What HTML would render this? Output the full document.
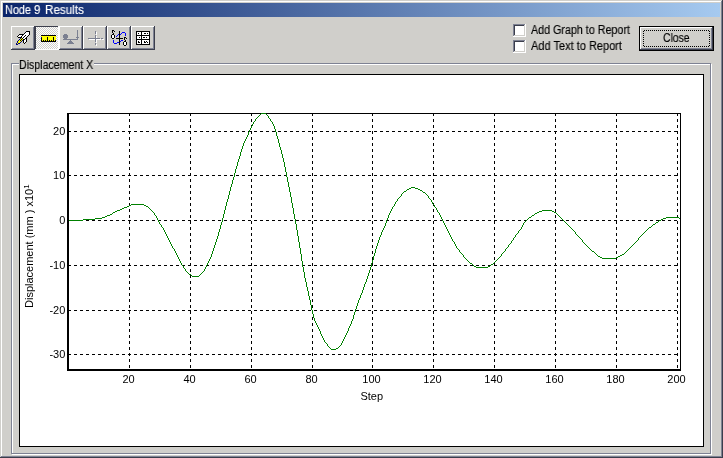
<!DOCTYPE html>
<html><head><meta charset="utf-8"><title>Node 9 Results</title>
<style>
html,body{margin:0;padding:0}
body{width:723px;height:458px;overflow:hidden;background:#d0cfcb;position:relative;font-family:"Liberation Sans",sans-serif;color:#000}
.abs{position:absolute}
.ln{position:absolute}
.title{left:3px;top:3px;width:717px;height:14px;background:linear-gradient(to right,#0a246a,#a6caf0)}
.tx{position:absolute;white-space:nowrap;font-size:12px;line-height:12px;transform-origin:0 0;display:block;will-change:transform;-webkit-text-stroke:.15px currentColor}
.tb{position:absolute;top:26px;width:24px;height:24px;box-sizing:border-box;background:#d0cfcb}
.tb.up{box-shadow:inset -1px -1px 0 #3b3e4c,inset 1px 1px 0 #fff,inset -2px -2px 0 #7e8293}
.tb.down{box-shadow:inset -1px -1px 0 #fff,inset 1px 1px 0 #3b3e4c;background:conic-gradient(#d0cfcb 25%,#fff 0 50%,#d0cfcb 0 75%,#fff 0) 0 0/2px 2px}
.tb svg{position:absolute;left:0;top:0}
.tb.down svg{left:0;top:0}
.cb{position:absolute;left:513px;width:13px;height:13px;background:#fff;box-shadow:inset -1px -1px 0 #fff,inset 1px 1px 0 #7e8293,inset -2px -2px 0 #d0cfcb,inset 2px 2px 0 #3b3e4c}
.btn{position:absolute;left:639px;top:26px;width:75px;height:25px;box-sizing:border-box;border:1px solid #000;background:#d0cfcb;box-shadow:inset -1px -1px 0 #3b3e4c,inset 1px 1px 0 #fff,inset -2px -2px 0 #7e8293}
.fr{position:absolute;left:-1px;top:-1px}
.panel{position:absolute;left:19px;top:74px;width:685px;height:373px;box-sizing:border-box;border:1px solid #000;background:#fff}
.plot{position:absolute;left:0;top:0;will-change:transform}
</style></head><body>
<!-- window frame -->
<div class="ln" style="left:1px;top:1px;width:720px;height:1px;background:#fff"></div>
<div class="ln" style="left:1px;top:1px;width:1px;height:455px;background:#fff"></div>
<div class="ln" style="left:721px;top:1px;width:1px;height:456px;background:#7e8293"></div>
<div class="ln" style="left:1px;top:456px;width:721px;height:1px;background:#7e8293"></div>
<div class="ln" style="left:722px;top:0;width:1px;height:458px;background:#3b3e4c"></div>
<div class="ln" style="left:0;top:457px;width:723px;height:1px;background:#3b3e4c"></div>
<div class="abs title"></div>
<div class="abs" style="left:0;top:4px;color:#fff"><span class="tx" style="left:4.6px;top:0;transform:scaleX(.905)">Node </span><span class="tx" style="left:34px;top:0;transform:scaleX(.95)">9 </span><span class="tx" style="left:44.8px;top:0;transform:scaleX(.972)">Results</span></div>
<!-- toolbar -->
<div class="tb up" style="left:11px"><svg width="24" height="24" viewBox="0 0 24 24" shape-rendering="crispEdges"><path fill="#000" d="M15 5h4v1h-4zM14 6h1v1h-1zM18 6h1v1h-1zM13 7h1v1h-1zM18 7h1v1h-1zM8 8h5v1h-5zM18 8h1v1h-1zM7 9h1v1h-1zM11 9h1v1h-1zM14 9h1v1h-1zM17 9h1v1h-1zM6 10h1v1h-1zM10 10h1v1h-1zM13 10h1v1h-1zM16 10h1v1h-1zM7 11h4v1h-4zM12 11h1v1h-1zM15 11h1v1h-1zM11 12h1v1h-1zM14 12h2v1h-2zM10 13h1v1h-1zM12 13h2v1h-2zM15 13h1v1h-1zM9 14h1v1h-1zM12 14h1v1h-1zM15 14h1v1h-1zM12 15h1v1h-1zM15 15h1v1h-1zM12 16h1v1h-1zM14 16h1v1h-1zM13 17h1v1h-1z"/><path fill="#fff" d="M15 6h3v1h-3zM14 7h4v1h-4zM13 8h5v1h-5zM8 9h3v1h-3zM12 9h2v1h-2zM15 9h2v1h-2zM7 10h3v1h-3zM11 10h2v1h-2zM14 10h2v1h-2zM11 11h1v1h-1zM13 11h2v1h-2zM12 12h2v1h-2zM14 13h1v1h-1zM13 14h2v1h-2zM13 15h2v1h-2zM13 16h1v1h-1z"/><path fill="#000080" d="M9 12h1v1h-1zM8 13h1v1h-1zM7 14h1v1h-1zM11 14h1v1h-1zM6 15h1v1h-1zM10 15h1v1h-1zM6 16h1v1h-1zM9 16h1v1h-1zM5 17h1v1h-1zM7 17h2v1h-2zM5 18h2v1h-2z"/><path fill="#ff0" d="M10 12h1v1h-1zM9 13h1v1h-1zM11 13h1v1h-1zM8 14h1v1h-1zM10 14h1v1h-1zM7 15h3v1h-3zM7 16h2v1h-2zM6 17h1v1h-1z"/></svg></div>
<div class="tb down" style="left:35px"><svg width="24" height="24" viewBox="0 0 24 24" shape-rendering="crispEdges"><path fill="#000" d="M6 9h15v1h-15zM12 11h1v1h-1zM18 11h1v1h-1zM6 12h1v1h-1zM12 12h1v1h-1zM18 12h1v1h-1zM6 13h1v1h-1zM12 13h1v1h-1zM18 13h1v1h-1zM6 14h1v1h-1zM8 14h1v1h-1zM10 14h1v1h-1zM12 14h1v1h-1zM14 14h1v1h-1zM16 14h1v1h-1zM18 14h1v1h-1zM20 14h1v1h-1zM6 15h15v1h-15z"/><path fill="#ff0" d="M6 10h15v1h-15zM7 11h5v1h-5zM13 11h5v1h-5zM19 11h2v1h-2zM7 12h5v1h-5zM13 12h5v1h-5zM19 12h2v1h-2zM7 13h5v1h-5zM13 13h5v1h-5zM19 13h2v1h-2zM7 14h1v1h-1zM9 14h1v1h-1zM11 14h1v1h-1zM13 14h1v1h-1zM15 14h1v1h-1zM17 14h1v1h-1zM19 14h1v1h-1z"/><path fill="#000080" d="M6 11h1v1h-1z"/></svg></div>
<div class="tb up" style="left:59px"><svg width="24" height="24" viewBox="0 0 24 24" shape-rendering="crispEdges"><path fill="#7b8091" d="M18 4h1v10h-1zM17 11h3v1h-3zM4 13h15v1h-15zM5 8h3v1h-3zM4 9h5v3h-5zM5 12h3v1h-3zM11 14h1v1h-1zM10 15h3v1h-3zM9 16h5v1h-5zM8 17h7v1h-7z"/></svg></div>
<div class="tb up" style="left:83px"><svg width="24" height="24" viewBox="0 0 24 24" shape-rendering="crispEdges"><path fill="#fff" d="M6 13h12v1h-12zM19 13h2v1h-2zM13 6h1v3h-1zM13 10h1v7h-1zM13 18h1v2h-1z"/><path fill="#7b8091" d="M5 12h12v1h-12zM18 12h2v1h-2zM12 5h1v3h-1zM12 9h1v7h-1zM12 17h1v2h-1z"/></svg></div>
<div class="tb up" style="left:107px"><svg width="24" height="24" viewBox="0 0 24 24" shape-rendering="crispEdges"><path fill="#fff" d="M5 9h2v3h-2zM17 16h2v3h-2z"/><path fill="#00f" d="M9 10h1v1h-1zM10 9h1v1h-1zM11 8h1v1h-1zM13 8h1v1h-1zM14 7h1v1h-1zM15 6h3v1h-3zM18 7h1v1h-1zM18 8h1v2h-1zM6 14h1v3h-1zM7 17h3v1h-3zM10 16h2v1h-2zM13 15h1v1h-1zM14 14h2v1h-2z"/><path fill="#000" d="M12 5h1v14h-1zM9 12h7v1h-7zM5 4h2v1h-2zM7 5h1v1h-1zM5 5h1v2h-1zM6 7h1v1h-1zM5 8h2v1h-2zM4 9h1v3h-1zM7 9h1v3h-1zM5 12h2v1h-2zM17 11h2v1h-2zM19 12h1v1h-1zM17 12h1v2h-1zM18 14h1v1h-1zM17 15h2v1h-2zM16 16h1v3h-1zM19 16h1v3h-1zM17 19h2v1h-2z"/></svg></div>
<div class="tb up" style="left:131px"><svg width="24" height="24" viewBox="0 0 24 24" shape-rendering="crispEdges"><path fill="#000" d="M5 5h14v14h-14z"/><path fill="#fff" d="M6 6h4v3h-4zM11 6h7v3h-7zM6 10h4v3h-4zM11 10h7v3h-7zM6 14h4v4h-4zM11 14h7v4h-7z"/><path fill="#000" d="M7 7h1v1h-1zM13 7h2v1h-2zM16 7h1v1h-1zM8 11h1v1h-1zM12 11h2v1h-2zM15 11h1v1h-1zM7 15h1v2h-1zM8 16h1v1h-1zM13 15h1v2h-1zM14 16h1v1h-1zM15 15h1v1h-1zM16 16h1v1h-1z"/></svg></div>
<!-- checkboxes -->
<div class="cb" style="top:24px"></div>
<div class="cb" style="top:40px"></div>
<span class="tx" style="left:530.7px;top:24px;transform:scaleX(.893)">Add Graph to Report</span>
<span class="tx" style="left:530.7px;top:40px;transform:scaleX(.917)">Add Text to Report</span>
<!-- close button -->
<div class="btn"><svg class="fr" width="75" height="25" viewBox="0 0 75 25" shape-rendering="crispEdges"><path d="M5 4.5H70M5 20.5H70M4.5 5V20M70.5 5V20" fill="none" stroke="#000" stroke-width="1" stroke-dasharray="1 1"/></svg></div>
<span class="tx" style="left:663px;top:32px;transform:scaleX(.864)">Close</span>
<!-- group box -->
<div class="ln" style="left:12px;top:64px;width:700px;height:391px;box-sizing:border-box;border:1px solid #fff"></div>
<div class="ln" style="left:11px;top:63px;width:700px;height:391px;box-sizing:border-box;border:1px solid #7e8293"></div>
<div class="ln" style="left:19px;top:62px;width:75px;height:4px;background:#d0cfcb"></div>
<span class="tx" style="left:19px;top:59px;transform:scaleX(.883)">Displacement X</span>
<div class="panel"></div>
<svg class="plot" width="723" height="458" viewBox="0 0 723 458">
<g shape-rendering="crispEdges" stroke="#000" stroke-width="1" stroke-dasharray="3 3" fill="none">
<line x1="129.5" y1="113" x2="129.5" y2="369"/>
<line x1="190.5" y1="113" x2="190.5" y2="369"/>
<line x1="251.5" y1="113" x2="251.5" y2="369"/>
<line x1="312.5" y1="113" x2="312.5" y2="369"/>
<line x1="372.5" y1="113" x2="372.5" y2="369"/>
<line x1="433.5" y1="113" x2="433.5" y2="369"/>
<line x1="494.5" y1="113" x2="494.5" y2="369"/>
<line x1="555.5" y1="113" x2="555.5" y2="369"/>
<line x1="616.5" y1="113" x2="616.5" y2="369"/>
<line x1="677.5" y1="113" x2="677.5" y2="369"/>
<line x1="68" y1="131.5" x2="680" y2="131.5"/>
<line x1="68" y1="175.5" x2="680" y2="175.5"/>
<line x1="68" y1="220.5" x2="680" y2="220.5"/>
<line x1="68" y1="265.5" x2="680" y2="265.5"/>
<line x1="68" y1="310.5" x2="680" y2="310.5"/>
<line x1="68" y1="354.5" x2="680" y2="354.5"/>
</g>
<g shape-rendering="crispEdges" fill="#000">
<rect x="67" y="113" width="2" height="258"/>
<rect x="67" y="113" width="614" height="1"/>
<rect x="680" y="113" width="1" height="258"/>
<rect x="67" y="369" width="614" height="2"/>
</g>
<path fill="#008000" shape-rendering="crispEdges" d="M69 220h1v1h-1zM70 220h1v1h-1zM71 220h1v1h-1zM72 220h1v1h-1zM73 220h1v1h-1zM74 220h1v1h-1zM75 220h1v1h-1zM76 220h1v1h-1zM77 220h1v1h-1zM78 220h1v1h-1zM79 220h1v1h-1zM80 220h1v1h-1zM81 220h1v1h-1zM82 220h1v1h-1zM83 219h1v1h-1zM84 219h1v1h-1zM85 219h1v1h-1zM86 219h1v1h-1zM87 219h1v1h-1zM88 219h1v1h-1zM89 219h1v1h-1zM90 219h1v1h-1zM91 219h1v1h-1zM92 219h1v1h-1zM93 219h1v1h-1zM94 219h1v1h-1zM95 218h1v1h-1zM96 218h1v1h-1zM97 218h1v1h-1zM98 218h1v1h-1zM99 218h1v1h-1zM100 218h1v1h-1zM101 218h1v1h-1zM102 217h1v1h-1zM103 217h1v1h-1zM104 217h1v1h-1zM105 216h1v1h-1zM106 216h1v1h-1zM107 215h1v1h-1zM108 215h1v1h-1zM109 215h1v1h-1zM110 214h1v1h-1zM111 214h1v1h-1zM112 213h1v1h-1zM113 212h1v1h-1zM114 212h1v1h-1zM115 211h1v1h-1zM116 211h1v1h-1zM117 210h1v1h-1zM118 210h1v1h-1zM119 210h1v1h-1zM120 209h1v1h-1zM121 209h1v1h-1zM122 208h1v1h-1zM123 208h1v1h-1zM124 207h1v1h-1zM125 207h1v1h-1zM126 207h1v1h-1zM127 206h1v1h-1zM128 206h1v1h-1zM129 205h1v1h-1zM130 205h1v1h-1zM131 204h1v1h-1zM132 204h1v1h-1zM133 204h1v1h-1zM134 204h1v1h-1zM135 204h1v1h-1zM136 204h1v1h-1zM137 204h1v1h-1zM138 204h1v1h-1zM139 204h1v1h-1zM140 204h1v1h-1zM141 204h1v1h-1zM142 204h1v1h-1zM143 204h1v1h-1zM144 205h1v1h-1zM145 205h1v1h-1zM146 206h1v1h-1zM147 206h1v1h-1zM148 207h1v1h-1zM149 208h1v1h-1zM150 209h1v1h-1zM151 210h1v1h-1zM152 211h1v1h-1zM153 212h1v1h-1zM154 213h1v2h-1zM155 215h1v1h-1zM156 216h1v2h-1zM157 218h1v2h-1zM158 220h1v2h-1zM159 222h1v2h-1zM160 224h1v1h-1zM161 225h1v2h-1zM162 227h1v1h-1zM163 228h1v2h-1zM164 230h1v2h-1zM165 232h1v2h-1zM166 234h1v2h-1zM167 236h1v2h-1zM168 238h1v2h-1zM169 240h1v2h-1zM170 242h1v2h-1zM171 244h1v2h-1zM172 246h1v2h-1zM173 248h1v1h-1zM174 249h1v2h-1zM175 251h1v2h-1zM176 253h1v2h-1zM177 255h1v2h-1zM178 257h1v2h-1zM179 259h1v2h-1zM180 261h1v2h-1zM181 263h1v2h-1zM182 265h1v1h-1zM183 266h1v2h-1zM184 268h1v1h-1zM185 269h1v2h-1zM186 271h1v1h-1zM187 272h1v1h-1zM188 273h1v1h-1zM189 274h1v1h-1zM190 274h1v1h-1zM191 275h1v1h-1zM192 276h1v1h-1zM193 276h1v1h-1zM194 276h1v1h-1zM195 276h1v1h-1zM196 276h1v1h-1zM197 276h1v1h-1zM198 276h1v1h-1zM199 275h1v1h-1zM200 274h1v1h-1zM201 273h1v1h-1zM202 272h1v1h-1zM203 271h1v1h-1zM204 269h1v2h-1zM205 267h1v2h-1zM206 265h1v2h-1zM207 263h1v2h-1zM208 261h1v2h-1zM209 259h1v2h-1zM210 257h1v2h-1zM211 254h1v3h-1zM212 251h1v3h-1zM213 248h1v3h-1zM214 245h1v3h-1zM215 242h1v3h-1zM216 239h1v3h-1zM217 236h1v3h-1zM218 232h1v4h-1zM219 229h1v3h-1zM220 225h1v4h-1zM221 222h1v3h-1zM222 218h1v4h-1zM223 214h1v4h-1zM224 210h1v4h-1zM225 206h1v4h-1zM226 202h1v4h-1zM227 199h1v3h-1zM228 195h1v4h-1zM229 191h1v4h-1zM230 187h1v4h-1zM231 184h1v3h-1zM232 180h1v4h-1zM233 177h1v3h-1zM234 173h1v4h-1zM235 169h1v4h-1zM236 166h1v3h-1zM237 162h1v4h-1zM238 159h1v3h-1zM239 156h1v3h-1zM240 152h1v4h-1zM241 149h1v3h-1zM242 146h1v3h-1zM243 143h1v3h-1zM244 141h1v2h-1zM245 139h1v2h-1zM246 137h1v2h-1zM247 135h1v2h-1zM248 132h1v3h-1zM249 130h1v2h-1zM250 128h1v2h-1zM251 126h1v2h-1zM252 124h1v2h-1zM253 122h1v2h-1zM254 121h1v1h-1zM255 119h1v2h-1zM256 118h1v1h-1zM257 117h1v1h-1zM258 116h1v1h-1zM259 115h1v1h-1zM260 114h1v1h-1zM261 113h1v1h-1zM262 113h1v1h-1zM263 113h1v1h-1zM264 113h1v1h-1zM265 113h1v1h-1zM266 114h1v1h-1zM267 115h1v1h-1zM268 116h1v2h-1zM269 118h1v1h-1zM270 119h1v2h-1zM271 121h1v1h-1zM272 122h1v2h-1zM273 124h1v2h-1zM274 126h1v3h-1zM275 129h1v3h-1zM276 132h1v4h-1zM277 136h1v3h-1zM278 139h1v4h-1zM279 143h1v4h-1zM280 147h1v3h-1zM281 150h1v4h-1zM282 154h1v4h-1zM283 158h1v4h-1zM284 162h1v5h-1zM285 167h1v5h-1zM286 172h1v5h-1zM287 177h1v5h-1zM288 182h1v5h-1zM289 187h1v5h-1zM290 192h1v5h-1zM291 197h1v6h-1zM292 203h1v5h-1zM293 208h1v6h-1zM294 214h1v5h-1zM295 219h1v5h-1zM296 224h1v6h-1zM297 230h1v6h-1zM298 236h1v6h-1zM299 242h1v6h-1zM300 248h1v6h-1zM301 254h1v7h-1zM302 261h1v6h-1zM303 267h1v5h-1zM304 272h1v6h-1zM305 278h1v4h-1zM306 282h1v5h-1zM307 287h1v4h-1zM308 291h1v5h-1zM309 296h1v4h-1zM310 300h1v5h-1zM311 305h1v5h-1zM312 310h1v4h-1zM313 314h1v4h-1zM314 318h1v3h-1zM315 321h1v2h-1zM316 323h1v2h-1zM317 325h1v2h-1zM318 327h1v2h-1zM319 329h1v2h-1zM320 331h1v3h-1zM321 334h1v2h-1zM322 336h1v2h-1zM323 338h1v2h-1zM324 340h1v2h-1zM325 342h1v1h-1zM326 343h1v1h-1zM327 344h1v2h-1zM328 346h1v1h-1zM329 347h1v1h-1zM330 348h1v1h-1zM331 349h1v1h-1zM332 349h1v1h-1zM333 349h1v1h-1zM334 349h1v1h-1zM335 349h1v1h-1zM336 348h1v1h-1zM337 348h1v1h-1zM338 347h1v1h-1zM339 346h1v1h-1zM340 345h1v1h-1zM341 343h1v2h-1zM342 341h1v2h-1zM343 339h1v2h-1zM344 337h1v2h-1zM345 335h1v2h-1zM346 333h1v2h-1zM347 331h1v2h-1zM348 328h1v3h-1zM349 326h1v2h-1zM350 324h1v2h-1zM351 321h1v3h-1zM352 319h1v2h-1zM353 315h1v4h-1zM354 312h1v3h-1zM355 309h1v3h-1zM356 306h1v3h-1zM357 303h1v3h-1zM358 300h1v3h-1zM359 298h1v2h-1zM360 295h1v3h-1zM361 293h1v2h-1zM362 290h1v3h-1zM363 287h1v3h-1zM364 284h1v3h-1zM365 282h1v2h-1zM366 279h1v3h-1zM367 276h1v3h-1zM368 273h1v3h-1zM369 270h1v3h-1zM370 267h1v3h-1zM371 263h1v4h-1zM372 260h1v3h-1zM373 256h1v4h-1zM374 253h1v3h-1zM375 249h1v4h-1zM376 246h1v3h-1zM377 243h1v3h-1zM378 240h1v3h-1zM379 237h1v3h-1zM380 235h1v2h-1zM381 232h1v3h-1zM382 230h1v2h-1zM383 228h1v2h-1zM384 226h1v2h-1zM385 223h1v3h-1zM386 220h1v3h-1zM387 218h1v2h-1zM388 215h1v3h-1zM389 213h1v2h-1zM390 211h1v2h-1zM391 209h1v2h-1zM392 207h1v2h-1zM393 206h1v1h-1zM394 204h1v2h-1zM395 202h1v2h-1zM396 201h1v1h-1zM397 199h1v2h-1zM398 198h1v1h-1zM399 197h1v1h-1zM400 196h1v1h-1zM401 194h1v2h-1zM402 193h1v1h-1zM403 192h1v1h-1zM404 191h1v1h-1zM405 191h1v1h-1zM406 190h1v1h-1zM407 189h1v1h-1zM408 189h1v1h-1zM409 188h1v1h-1zM410 188h1v1h-1zM411 187h1v1h-1zM412 187h1v1h-1zM413 187h1v1h-1zM414 187h1v1h-1zM415 188h1v1h-1zM416 188h1v1h-1zM417 188h1v1h-1zM418 189h1v1h-1zM419 189h1v1h-1zM420 190h1v1h-1zM421 190h1v1h-1zM422 191h1v1h-1zM423 192h1v1h-1zM424 192h1v1h-1zM425 193h1v1h-1zM426 194h1v1h-1zM427 195h1v1h-1zM428 196h1v2h-1zM429 198h1v1h-1zM430 199h1v1h-1zM431 200h1v2h-1zM432 202h1v2h-1zM433 204h1v1h-1zM434 205h1v2h-1zM435 207h1v1h-1zM436 208h1v2h-1zM437 210h1v2h-1zM438 212h1v1h-1zM439 213h1v2h-1zM440 215h1v2h-1zM441 217h1v2h-1zM442 219h1v2h-1zM443 221h1v2h-1zM444 223h1v2h-1zM445 225h1v2h-1zM446 227h1v2h-1zM447 229h1v2h-1zM448 231h1v2h-1zM449 233h1v2h-1zM450 235h1v2h-1zM451 237h1v2h-1zM452 239h1v2h-1zM453 241h1v1h-1zM454 242h1v2h-1zM455 244h1v2h-1zM456 246h1v2h-1zM457 248h1v1h-1zM458 249h1v1h-1zM459 250h1v2h-1zM460 252h1v1h-1zM461 253h1v1h-1zM462 254h1v1h-1zM463 255h1v2h-1zM464 257h1v1h-1zM465 258h1v1h-1zM466 259h1v1h-1zM467 260h1v1h-1zM468 261h1v1h-1zM469 262h1v1h-1zM470 263h1v1h-1zM471 263h1v1h-1zM472 264h1v1h-1zM473 265h1v1h-1zM474 266h1v1h-1zM475 266h1v1h-1zM476 267h1v1h-1zM477 267h1v1h-1zM478 267h1v1h-1zM479 267h1v1h-1zM480 267h1v1h-1zM481 267h1v1h-1zM482 267h1v1h-1zM483 267h1v1h-1zM484 267h1v1h-1zM485 267h1v1h-1zM486 267h1v1h-1zM487 267h1v1h-1zM488 266h1v1h-1zM489 266h1v1h-1zM490 265h1v1h-1zM491 264h1v1h-1zM492 264h1v1h-1zM493 263h1v1h-1zM494 262h1v1h-1zM495 261h1v1h-1zM496 260h1v1h-1zM497 259h1v1h-1zM498 258h1v1h-1zM499 257h1v1h-1zM500 256h1v1h-1zM501 254h1v2h-1zM502 253h1v1h-1zM503 252h1v1h-1zM504 251h1v1h-1zM505 249h1v2h-1zM506 248h1v1h-1zM507 247h1v1h-1zM508 245h1v2h-1zM509 244h1v1h-1zM510 243h1v1h-1zM511 241h1v2h-1zM512 240h1v1h-1zM513 238h1v2h-1zM514 237h1v1h-1zM515 235h1v2h-1zM516 234h1v1h-1zM517 233h1v1h-1zM518 231h1v2h-1zM519 230h1v1h-1zM520 229h1v1h-1zM521 227h1v2h-1zM522 225h1v2h-1zM523 223h1v2h-1zM524 222h1v1h-1zM525 221h1v1h-1zM526 220h1v1h-1zM527 219h1v1h-1zM528 218h1v1h-1zM529 217h1v1h-1zM530 217h1v1h-1zM531 216h1v1h-1zM532 215h1v1h-1zM533 215h1v1h-1zM534 214h1v1h-1zM535 213h1v1h-1zM536 213h1v1h-1zM537 212h1v1h-1zM538 212h1v1h-1zM539 211h1v1h-1zM540 211h1v1h-1zM541 211h1v1h-1zM542 210h1v1h-1zM543 210h1v1h-1zM544 210h1v1h-1zM545 210h1v1h-1zM546 210h1v1h-1zM547 210h1v1h-1zM548 210h1v1h-1zM549 210h1v1h-1zM550 210h1v1h-1zM551 210h1v1h-1zM552 211h1v1h-1zM553 211h1v1h-1zM554 212h1v1h-1zM555 212h1v1h-1zM556 213h1v1h-1zM557 214h1v1h-1zM558 215h1v1h-1zM559 216h1v1h-1zM560 217h1v1h-1zM561 218h1v1h-1zM562 219h1v1h-1zM563 220h1v1h-1zM564 221h1v1h-1zM565 222h1v1h-1zM566 223h1v1h-1zM567 224h1v1h-1zM568 225h1v1h-1zM569 226h1v1h-1zM570 227h1v1h-1zM571 228h1v1h-1zM572 229h1v1h-1zM573 230h1v1h-1zM574 231h1v1h-1zM575 232h1v2h-1zM576 234h1v1h-1zM577 235h1v1h-1zM578 236h1v1h-1zM579 237h1v1h-1zM580 238h1v1h-1zM581 239h1v1h-1zM582 240h1v2h-1zM583 242h1v1h-1zM584 243h1v1h-1zM585 244h1v1h-1zM586 245h1v1h-1zM587 246h1v1h-1zM588 247h1v1h-1zM589 248h1v1h-1zM590 249h1v1h-1zM591 250h1v1h-1zM592 251h1v1h-1zM593 251h1v1h-1zM594 252h1v1h-1zM595 253h1v1h-1zM596 254h1v1h-1zM597 255h1v1h-1zM598 256h1v1h-1zM599 256h1v1h-1zM600 257h1v1h-1zM601 257h1v1h-1zM602 258h1v1h-1zM603 258h1v1h-1zM604 258h1v1h-1zM605 258h1v1h-1zM606 258h1v1h-1zM607 258h1v1h-1zM608 258h1v1h-1zM609 258h1v1h-1zM610 258h1v1h-1zM611 258h1v1h-1zM612 258h1v1h-1zM613 258h1v1h-1zM614 258h1v1h-1zM615 258h1v1h-1zM616 257h1v1h-1zM617 257h1v1h-1zM618 256h1v1h-1zM619 256h1v1h-1zM620 255h1v1h-1zM621 255h1v1h-1zM622 254h1v1h-1zM623 254h1v1h-1zM624 253h1v1h-1zM625 252h1v1h-1zM626 251h1v1h-1zM627 250h1v1h-1zM628 249h1v1h-1zM629 248h1v1h-1zM630 247h1v1h-1zM631 246h1v1h-1zM632 245h1v1h-1zM633 244h1v1h-1zM634 243h1v1h-1zM635 242h1v1h-1zM636 241h1v1h-1zM637 240h1v1h-1zM638 238h1v2h-1zM639 237h1v1h-1zM640 236h1v1h-1zM641 235h1v1h-1zM642 234h1v1h-1zM643 233h1v1h-1zM644 232h1v1h-1zM645 231h1v1h-1zM646 230h1v1h-1zM647 229h1v1h-1zM648 228h1v1h-1zM649 227h1v1h-1zM650 227h1v1h-1zM651 226h1v1h-1zM652 225h1v1h-1zM653 224h1v1h-1zM654 224h1v1h-1zM655 223h1v1h-1zM656 222h1v1h-1zM657 222h1v1h-1zM658 221h1v1h-1zM659 220h1v1h-1zM660 220h1v1h-1zM661 219h1v1h-1zM662 219h1v1h-1zM663 218h1v1h-1zM664 218h1v1h-1zM665 218h1v1h-1zM666 217h1v1h-1zM667 217h1v1h-1zM668 217h1v1h-1zM669 217h1v1h-1zM670 217h1v1h-1zM671 217h1v1h-1zM672 217h1v1h-1zM673 217h1v1h-1zM674 217h1v1h-1zM675 217h1v1h-1zM676 217h1v1h-1zM677 217h1v1h-1zM678 217h1v1h-1zM679 218h1v1h-1z"/>
<g font-family="'Liberation Sans', sans-serif" font-size="11" fill="#000">
<text x="65.3" y="135" text-anchor="end">20</text>
<text x="65.3" y="179" text-anchor="end">10</text>
<text x="65.3" y="224" text-anchor="end">0</text>
<text x="65.3" y="269" text-anchor="end">-10</text>
<text x="65.3" y="314" text-anchor="end">-20</text>
<text x="65.3" y="358" text-anchor="end">-30</text>
<text x="128.5" y="383" text-anchor="middle">20</text>
<text x="189.5" y="383" text-anchor="middle">40</text>
<text x="250.5" y="383" text-anchor="middle">60</text>
<text x="311.5" y="383" text-anchor="middle">80</text>
<text x="371.5" y="383" text-anchor="middle">100</text>
<text x="432.5" y="383" text-anchor="middle">120</text>
<text x="493.5" y="383" text-anchor="middle">140</text>
<text x="554.5" y="383" text-anchor="middle">160</text>
<text x="615.5" y="383" text-anchor="middle">180</text>
<text x="676.5" y="383" text-anchor="middle">200</text>
<text x="371.7" y="400" text-anchor="middle">Step</text>
<text transform="translate(33.25 308) rotate(-90)">Displacement (mm ) x10<tspan font-size="8" dy="-4">1</tspan></text>
</g></svg>
</body></html>
